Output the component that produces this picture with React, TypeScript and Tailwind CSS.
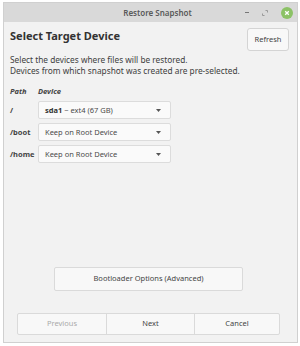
const ROWS = [
  { path: "/", device: "sda1", extra: " ~ ext4 (67 GB)", bold: true },
  { path: "/boot", device: "Keep on Root Device", extra: "", bold: false },
  { path: "/home", device: "Keep on Root Device", extra: "", bold: false },
];

function Combo({ device, extra, bold }: { device: string; extra: string; bold: boolean }) {
  return (
    <div className="flex h-[18px] w-[133px] items-center justify-between rounded-[2px] border border-[#dcdcdc] bg-[#fafafa] pl-[6px] pr-[9px] text-[7.5px] text-[#4a4a4a]">
      <span>
        {bold ? <span className="font-bold text-[#333]">{device}</span> : device}
        {extra}
      </span>
      <svg width="5" height="3" viewBox="0 0 5 3">
        <path d="M0 0h5L2.5 3z" fill="#555" />
      </svg>
    </div>
  );
}

export default function App() {
  return (
    <div
      className="h-[346px] w-[300px] bg-white pb-[3px] pl-[3px] pr-[2px] pt-[2px]"
      style={{ fontFamily: '"Noto Sans", sans-serif' }}
    >
      <div className="flex h-full flex-col border border-[#d0d0d0] bg-[#f2f2f2]">
        <div className="grid h-[19px] grid-cols-[1fr_auto_1fr] items-center bg-[#d9d9d9] pl-[14px] text-[8px] font-semibold text-[#5a5a5a]">
          <div />
          <span>Restore Snapshot</span>
          <div className="flex items-center justify-end gap-[13px] pr-[4px]">
            <span className="h-px w-[4px] bg-[#777]" />
            <svg width="6" height="6" viewBox="0 0 6 6" className="text-[#999]">
              <path d="M3.5 0.5h2v2M2.5 5.5h-2v-2" stroke="currentColor" strokeWidth="1" fill="none" />
            </svg>
            <span className="flex h-[12px] w-[12px] items-center justify-center rounded-full bg-[#8cc266]">
              <svg width="6" height="6" viewBox="0 0 6 6">
                <path d="M1.2 1.2l3.6 3.6M4.8 1.2L1.2 4.8" stroke="white" strokeWidth="1.3" />
              </svg>
            </span>
          </div>
        </div>

        <div className="flex flex-1 flex-col pl-[6px] pr-[8px]">
          <div className="mt-[6px] flex items-start justify-between">
            <h1 className="text-[11px] font-bold leading-[15px] text-[#333]">Select Target Device</h1>
            <button className="h-[23px] w-[42px] rounded-[3px] border border-[#d4d4d4] bg-[#f8f8f8] text-[7.5px] text-[#444]">
              Refresh
            </button>
          </div>

          <div className="mt-[3px] text-[8.3px] leading-[11px] text-[#404040]">
            <p>Select the devices where files will be restored.</p>
            <p>Devices from which snapshot was created are pre-selected.</p>
          </div>

          <div className="mt-[9px] grid grid-cols-[28px_auto] items-center gap-y-[4px] text-[7.5px] leading-[12px] text-[#444]">
            <span className="font-bold italic">Path</span>
            <span className="font-bold italic">Device</span>
            {ROWS.map((r) => (
              <div key={r.path} className="contents">
                <span className="font-bold">{r.path}</span>
                <Combo device={r.device} extra={r.extra} bold={r.bold} />
              </div>
            ))}
          </div>

          <button className="ml-[44px] mt-auto h-[24px] w-[189px] rounded-[2px] border border-[#dadada] bg-[#f8f8f8] text-[7.5px] text-[#444]">
            Bootloader Options (Advanced)
          </button>

          <div className="mb-[7px] ml-[7px] mt-[22px] flex h-[22px] w-[263px] rounded-[2px] border border-[#dadada] bg-[#f8f8f8] text-[7.5px]">
            <button className="w-[88px] text-[#aaa]">Previous</button>
            <button className="w-[88px] border-l border-[#dadada] text-[#444]">Next</button>
            <button className="flex-1 border-l border-[#dadada] text-[#444]">Cancel</button>
          </div>
        </div>
      </div>
    </div>
  );
}
